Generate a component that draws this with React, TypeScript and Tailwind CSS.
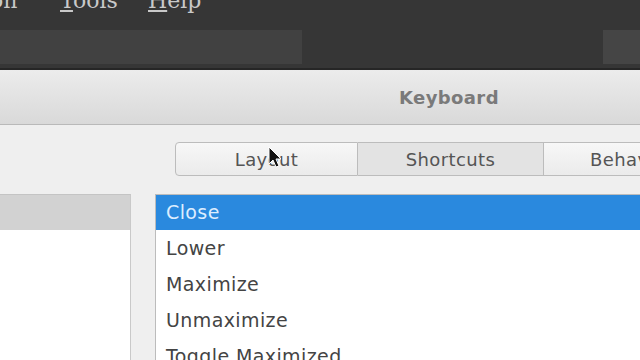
import React from "react"

const rows = ["Close", "Lower", "Maximize", "Unmaximize", "Toggle Maximized", "Minimize"]

const Cursor = () => (
  <svg className="absolute left-[268px] top-[146px]" width="16" height="24" viewBox="0 0 16 24">
    <path d="M1 1 L1 18 L5 14 L8 21 L11 20 L8 13 L13 13 Z" fill="#111" stroke="#fff" strokeWidth="1" strokeLinejoin="round" />
  </svg>
)

export default function App() {
  return (
    <div className="relative w-[640px] h-[360px] overflow-hidden bg-[#efefef] font-['DejaVu_Sans','Noto_Sans',sans-serif] tracking-[0.4px]">
      {/* host app menu + toolbar behind dialog */}
      <div className="h-[68px] bg-[#363636] flex flex-col">
        <div className="h-[30px] flex items-start text-[22px] leading-none text-[#c9c9c9] font-['DejaVu_Serif',serif] tracking-normal -mt-[10px]">
          <span className="w-[60px] -ml-[10px] pl-[0px]">on</span>
          <span className="w-[88px] ml-[10px]"><span className="underline">T</span>ools</span>
          <span><span className="underline">H</span>elp</span>
        </div>
        <div className="flex justify-between mt-[10px]">
          <div className="w-[302px] h-[34px] bg-[#414141]" />
          <div className="w-[37px] h-[34px] bg-[#454545]" />
        </div>
      </div>
      <div className="h-[2px] bg-[#262626]" />

      {/* dialog titlebar */}
      <div className="h-[55px] bg-gradient-to-b from-[#ececec] to-[#d9d9d9] border-b border-[#b9b9b9] flex items-center">
        <span className="ml-[399px] text-[18px] font-bold text-[#7a7a7a]">Keyboard</span>
      </div>

      {/* dialog body */}
      <div className="pt-[17px]">
        <div className="ml-[175px] flex h-[34px] text-[18px] text-[#555] whitespace-nowrap">
          <div className="w-[183px] shrink-0 flex items-center justify-center border border-[#bcbcbc] rounded-l-[4px] bg-gradient-to-b from-[#f7f7f7] to-[#ebebeb]">
            Layout
          </div>
          <div className="w-[185px] shrink-0 flex items-center justify-center border-y border-[#bcbcbc] bg-[#e3e3e3]">
            Shortcuts
          </div>
          <div className="w-[140px] shrink-0 flex items-center pl-[46px] border border-[#bcbcbc] bg-gradient-to-b from-[#f7f7f7] to-[#ebebeb]">
            Behavior
          </div>
        </div>

        <div className="mt-[18px] flex h-[170px]">
          <div className="w-[131px] shrink-0 bg-white border-r border-[#c9c9c9] border-t border-t-[#c4c4c4]">
            <div className="h-[35px] bg-[#d2d2d2]" />
          </div>
          <div className="ml-[24px] w-[500px] shrink-0 bg-white border-l border-t border-[#bcbcbc] text-[19px] text-[#444] whitespace-nowrap">
            {rows.map((r, i) => (
              <div
                key={r}
                className={
                  i === 0
                    ? "h-[35px] flex items-center pl-[10px] bg-[#2a89de] text-[#dcedff]"
                    : "h-[36px] flex items-center pl-[10px]"
                }
              >
                {r}
              </div>
            ))}
          </div>
        </div>
      </div>
      <Cursor />
    </div>
  )
}
